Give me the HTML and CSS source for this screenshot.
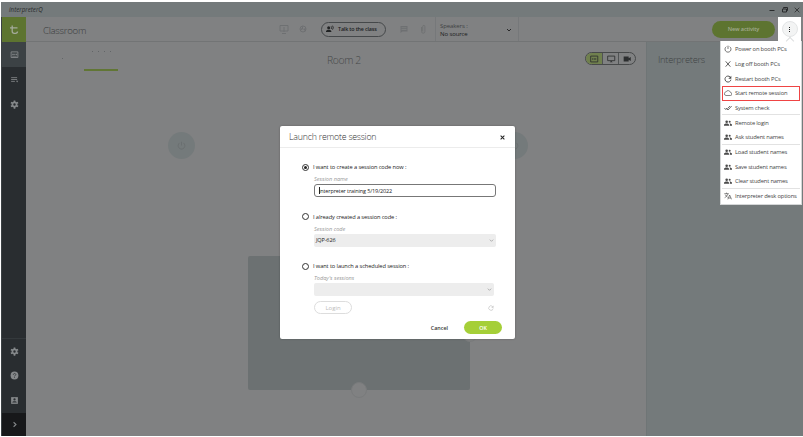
FILE: index.html
```html
<!DOCTYPE html>
<html lang="en">
<head>
    <meta charset="UTF-8">
    <meta name="viewport" content="width=device-width, initial-scale=1.0">
    <title>interpreterQ</title>
    <link rel="stylesheet" href="styles.css">
</head>
<body>
    <svg class="defs" width="0" height="0">
        <symbol id="power" viewBox="0 0 24 24"><path d="M12 2v10M7 5a9 9 0 1 0 10 0" fill="none" stroke="currentColor" stroke-width="2.2"/></symbol>
        <symbol id="cross" viewBox="0 0 24 24"><path d="M5 4l14 16M19 4L5 20" fill="none" stroke="currentColor" stroke-width="2.6"/></symbol>
        <symbol id="refresh" viewBox="0 0 24 24"><path d="M18.500 6a9 9 0 1 0 2.300 8" fill="none" stroke="currentColor" stroke-width="2.800"/><path d="M22 2v9h-9z" fill="currentColor"/></symbol>
        <symbol id="cloud" viewBox="0 0 24 24"><path d="M6 19.500h13a4.500 4.500 0 0 0 .5-9A7.500 7.500 0 0 0 5.500 9 5.300 5.300 0 0 0 6 19.500z" fill="none" stroke="currentColor" stroke-width="2"/></symbol>
        <symbol id="checks" viewBox="0 0 24 24"><path d="M1 12l6 6M6 12l6 6L23 6M10 14l8-8" fill="none" stroke="currentColor" stroke-width="2.400"/></symbol>
        <symbol id="people" viewBox="0 0 24 24"><circle cx="8" cy="8" r="3.800"/><circle cx="17" cy="8.500" r="3"/><path d="M0 20v-2c0-3 4-4.500 8-4.500s7 1.500 7 4.500v2zM17 20h7v-2c0-3-3.500-4.500-7.500-4.500 1 1 1.500 2.500 1.500 4z"/></symbol>
        <symbol id="translate" viewBox="0 0 24 24"><path d="M1 5h13M7.500 2v3M12 5c-1 5-5 9-10 12M4 8c1 3 4 6 7 8" fill="none" stroke="currentColor" stroke-width="2"/><path d="M11.500 22L17 9l5.500 13M13.500 18h7" fill="none" stroke="currentColor" stroke-width="2"/></symbol>
        <symbol id="down" viewBox="0 0 24 24"><path d="M4 8l8 8 8-8" fill="none" stroke="currentColor" stroke-width="3.500"/></symbol>
        <symbol id="gear" viewBox="0 0 24 24"><circle cx="12" cy="12" r="5.500" fill="none" stroke="currentColor" stroke-width="4.500"/><path d="M12 1v5M12 18v5M2.500 6.500l4.300 2.500M17.200 15l4.300 2.500M2.500 17.500L6.800 15M17.200 9l4.300-2.500" stroke="currentColor" stroke-width="4.500"/></symbol>
    </svg>

    <div class="app">
        <div class="titlebar">
            <span class="app-name">interpreterQ</span>
            <div class="window-buttons">
                <svg viewBox="0 0 6 6"><path d="M.5 3.500h5" stroke="currentColor"/></svg>
                <svg viewBox="0 0 6 6"><path d="M1.500 1.500v-1h4v3h-1M.5 2h4v3h-4z" fill="none" stroke="currentColor" stroke-width="1"/></svg>
                <svg viewBox="0 0 6 6"><path d="M.7.7l4.600 4.600M5.300.7L.7 5.300" stroke="currentColor" stroke-width=".8"/></svg>
            </div>
        </div>

        <div class="body">
            <nav class="sidebar">
                <a class="nav-item logo"><svg viewBox="0 0 12 12"><path d="M4.200 1.500v5.800q0 2 2 2h1.300q2 0 2-1.800M2 3.800h7.500" fill="none" stroke="currentColor" stroke-width="1.300"/></svg></a>
                <a class="nav-item active"><svg viewBox="0 0 12 12"><path d="M1.500 2.500h9v7.500h-9z" fill="none" stroke="currentColor" stroke-width="1.200"/><path d="M3 5h2v2H3zM5.700 5h1v2h-1zM7.400 5h1.800v2H7.400zM3 8h6v.8H3z" fill="currentColor"/></svg></a>
                <a class="nav-item"><svg viewBox="0 0 12 12"><path d="M1.500 3.500h8M1.500 6h8M1.500 8.500h5" stroke="currentColor" stroke-width="1.100"/><path d="M8 7.500h3L9.500 10z" fill="currentColor"/></svg></a>
                <a class="nav-item"><svg viewBox="0 0 24 24"><use href="#gear"/></svg></a>
                <div class="nav-space"></div>
                <a class="nav-item bottom"><svg viewBox="0 0 24 24"><use href="#gear"/></svg></a>
                <a class="nav-item"><svg viewBox="0 0 12 12"><circle cx="6" cy="6" r="5.200" fill="currentColor"/><path d="M4.400 5c0-2.200 3.300-2.200 3.300-.2C7.700 6 6 6 6 7.300M6 8.200v1" fill="none" stroke="#292d30" stroke-width="1"/></svg></a>
                <a class="nav-item"><svg viewBox="0 0 12 12"><path d="M1.500 1.500h9v9h-9z" fill="currentColor"/><circle cx="6" cy="4.500" r="1.500" fill="#292d30"/><path d="M3 8.800c0-2.400 6-2.400 6 0z" fill="#292d30"/></svg></a>
                <a class="nav-item expand"><svg viewBox="0 0 12 12"><path d="M4.800 3L8 6 4.800 9" fill="none" stroke="currentColor" stroke-width="1.400"/></svg></a>
            </nav>

            <div class="page">
                <header class="header">
                    <h1 class="page-title">Classroom</h1>
                    <div class="tools">
                        <svg class="tool" viewBox="0 0 12 12"><path d="M2 2.500h8v5.500H2zM4 10.500h4M6 4v5" fill="none" stroke="currentColor"/></svg>
                        <svg class="tool" viewBox="0 0 12 12"><circle cx="6" cy="6" r="3" fill="none" stroke="currentColor"/><path d="M6 2.500V6L3 8zM6 6l3-1-1 3z" fill="currentColor"/></svg>
                        <button class="talk-btn">
                            <svg viewBox="0 0 24 24"><circle cx="8" cy="8" r="4.500"/><path d="M0 21v-2c0-3 4-5 8-5s8 2 8 5v2z"/><path d="M15.500 4q3 4 0 8M19.500 2q5 6 0 12" fill="none" stroke="currentColor" stroke-width="2.500"/></svg>
                            Talk to the class
                        </button>
                        <svg class="tool" viewBox="0 0 12 12"><path d="M2.500 3h7v5.500H4.300L2.500 10z" fill="currentColor"/><path d="M3.500 4.700h5M3.500 6.500h5" stroke="#808182" stroke-width=".8"/></svg>
                        <svg class="tool" viewBox="0 0 12 12"><path d="M4.500 4v4.500a1.700 1.700 0 0 0 3.400 0V3.500a1 1 0 0 0-2.200 0v5" fill="none" stroke="currentColor" stroke-width=".9"/></svg>
                    </div>
                    <div class="speakers">
                        <div>
                            <div class="speakers-label">Speakers :</div>
                            <div class="speakers-value">No source</div>
                        </div>
                        <svg viewBox="0 0 24 24"><use href="#down"/></svg>
                    </div>
                    <button class="new-btn">New activity</button>
                    <div class="more"><button class="more-btn"><i></i><i></i><i></i></button></div>
                </header>

                <div class="content">
                    <main class="room">
                        <div class="room-bar">
                            <div class="room-tabs">
                                <span class="tab"><i></i></span>
                                <span class="tab current"><i></i><i></i><i></i><i></i></span>
                            </div>
                            <h2 class="room-title">Room 2</h2>
                            <div class="view-switch">
                                <span class="selected"><svg viewBox="0 0 12 12"><path d="M2 2.500h8.500v7H2z" fill="none" stroke="currentColor"/><path d="M4 5h1v2H4zM5.800 5h1v2h-1zM7.600 5h1v2h-1z" fill="currentColor"/></svg></span>
                                <span><svg viewBox="0 0 12 12"><path d="M2 2.500h8.500v5.500H2z" fill="none" stroke="currentColor"/><path d="M4.500 10L6.200 8 8 10z" fill="currentColor"/></svg></span>
                                <span><svg viewBox="0 0 12 12"><path d="M2 3h6v2l2.500-1.500v5L8 7v2H2z" fill="currentColor"/></svg></span>
                            </div>
                        </div>
                        <!-- room plan: seats and desk placed freely -->
                        <div class="plan">
                            <div class="seat seat-left"><svg viewBox="0 0 24 24"><use href="#power"/></svg></div>
                            <div class="seat seat-right"><svg viewBox="0 0 24 24"><use href="#power"/></svg></div>
                            <div class="desk"></div>
                            <div class="knob knob-right"></div>
                            <div class="knob knob-bottom"></div>
                        </div>
                    </main>
                    <aside class="interpreters">
                        <h2>Interpreters</h2>
                    </aside>
                </div>
            </div>
        </div>
    </div>

    <div class="menu">
        <div class="menu-item"><svg viewBox="0 0 24 24"><use href="#power"/></svg>Power on booth PCs</div>
        <div class="menu-item"><svg viewBox="0 0 24 24"><use href="#cross"/></svg>Log off booth PCs</div>
        <div class="menu-item"><svg viewBox="0 0 24 24"><use href="#refresh"/></svg>Restart booth PCs</div>
        <div class="menu-item marked"><svg viewBox="0 0 24 24"><use href="#cloud"/></svg>Start remote session</div>
        <div class="menu-item line"><svg viewBox="0 0 24 24"><use href="#checks"/></svg>System check</div>
        <div class="menu-item"><svg viewBox="0 0 24 24"><use href="#people"/></svg>Remote login</div>
        <div class="menu-item line"><svg viewBox="0 0 24 24"><use href="#people"/></svg>Ask student names</div>
        <div class="menu-item"><svg viewBox="0 0 24 24"><use href="#people"/></svg>Load student names</div>
        <div class="menu-item"><svg viewBox="0 0 24 24"><use href="#people"/></svg>Save student names</div>
        <div class="menu-item line"><svg viewBox="0 0 24 24"><use href="#people"/></svg>Clear student names</div>
        <div class="menu-item"><svg viewBox="0 0 24 24"><use href="#translate"/></svg>Interpreter desk options</div>
    </div>

    <div class="modal">
        <div class="modal-header">
            <h3>Launch remote session</h3>
            <svg viewBox="0 0 24 24"><path d="M3 3l18 18M21 3L3 21" stroke="currentColor" stroke-width="5"/></svg>
        </div>
        <div class="modal-body">
            <section class="option">
                <div class="option-title"><span class="radio checked"></span>I want to create a session code now :</div>
                <div class="label">Session name</div>
                <div class="field text-field"><span class="caret"></span>interpreter training 5/19/2022</div>
            </section>
            <section class="option">
                <div class="option-title"><span class="radio"></span>I already created a session code :</div>
                <div class="label">Session code</div>
                <div class="field select">JQP-626<svg viewBox="0 0 24 24"><use href="#down"/></svg></div>
            </section>
            <section class="option">
                <div class="option-title"><span class="radio"></span>I want to launch a scheduled session :</div>
                <div class="label">Today's sessions</div>
                <div class="field select short"><svg viewBox="0 0 24 24"><use href="#down"/></svg></div>
            </section>
            <div class="login-row">
                <button class="login-btn">Login</button>
                <svg viewBox="0 0 24 24"><use href="#refresh"/></svg>
            </div>
        </div>
        <div class="modal-footer">
            <button class="cancel-btn">Cancel</button>
            <button class="ok-btn">OK</button>
        </div>
    </div>
</body>
</html>
```

FILE: styles.css
```css
* {
    margin: 0;
    padding: 0;
    box-sizing: border-box;
}

body {
    position: relative;
    width: 803px;
    height: 437px;
    overflow: hidden;
    background: #fff;
    font-family: 'Open Sans', 'Noto Sans', sans-serif;
    font-size: 6px;
    color: #444;
}

button {
    font: inherit;
    border: none;
    background: none;
}

h1, h2, h3 {
    font-weight: 300;
    white-space: nowrap;
}

svg {
    display: block;
    flex: none;
    fill: currentColor;
}

.defs {
    position: absolute;
}

.app {
    display: flex;
    flex-direction: column;
    height: 436px;
    padding: 2px 0 0 1px;
}

.titlebar {
    flex: none;
    display: flex;
    align-items: center;
    justify-content: space-between;
    height: 15px;
    padding: 0 3px 0 8px;
    background: #747a7b;
    color: #292b2c;
}

.app-name {
    font-style: italic;
    font-size: 6.2px;
}

.window-buttons {
    display: flex;
    gap: 6.5px;
}

.window-buttons svg {
    width: 6px;
    height: 6px;
}

.body {
    flex: 1;
    display: flex;
    min-height: 0;
}

/* sidebar */
.sidebar {
    width: 25px;
    display: flex;
    flex-direction: column;
    background: #292d30;
    border-left: 1px solid #3b4144;
    color: #85888a;
}

.nav-item {
    flex: none;
    height: 25px;
    display: flex;
    align-items: center;
    justify-content: center;
}

.nav-item svg {
    width: 9px;
    height: 9px;
}

.nav-item.logo svg {
    width: 12px;
    height: 12px;
}

.logo {
    background: #5d7430;
    color: #a4aa9b;
}

.active {
    background: #3c4245;
}

.nav-space {
    flex: 1;
}

.bottom {
    border-top: 1px solid #34393c;
}

.expand {
    height: 23px;
    background: #17181a;
}

/* header */
.page {
    flex: 1;
    display: flex;
    flex-direction: column;
}

.header {
    flex: none;
    display: flex;
    align-items: center;
    height: 25px;
    padding-left: 17px;
    background: #808182;
    border-bottom: 1px solid #727475;
}

.page-title {
    width: 235px;
    padding-top: 2px;
    font-size: 9.6px;
    letter-spacing: -0.28px;
    color: #393b3c;
}

.tools {
    width: 157px;
    display: flex;
    align-items: center;
    gap: 7px;
}

.tool {
    width: 12px;
    height: 12px;
    color: #6e7072;
}

.talk-btn {
    width: 65px;
    height: 15px;
    margin: 0 5px;
    display: flex;
    align-items: center;
    gap: 4px;
    padding-left: 4px;
    border: 1px solid #45484a;
    border-radius: 8px;
    font-size: 5.4px;
    letter-spacing: -0.17px;
    font-weight: 600;
    white-space: nowrap;
    color: #202223;
}

.talk-btn svg {
    width: 8px;
    height: 8px;
}

.speakers {
    width: 84px;
    height: 24px;
    display: flex;
    align-items: center;
    justify-content: space-between;
    padding: 1px 6px 0 4px;
    border: solid #76787a;
    border-width: 0 1px;
    line-height: 8px;
    letter-spacing: -0.1px;
}

.speakers-label {
    color: #3f4142;
}

.speakers-value,
.speakers svg {
    color: #1b1c1d;
}

.speakers svg {
    width: 6px;
    height: 6px;
}

.new-btn {
    width: 63px;
    height: 17px;
    margin-left: auto;
    border-radius: 9px;
    background: #5d7430;
    color: #a2aa91;
    font-weight: 600;
    font-size: 5.6px;
    letter-spacing: -0.15px;
}

.more {
    width: 23px;
    height: 25px;
    margin: 0 2px 0 3px;
    display: flex;
    align-items: center;
    justify-content: center;
    background: #fff;
}

.more-btn {
    width: 16px;
    height: 16px;
    display: flex;
    flex-direction: column;
    align-items: center;
    justify-content: center;
    gap: 1px;
    border: 1px solid #e3e5e6;
    border-radius: 50%;
    background: #f3f4f4;
}

.more-btn i {
    width: 1px;
    height: 1px;
    background: #222;
}

/* room */
.content {
    flex: 1;
    display: flex;
}

.room {
    flex: 1;
    background: #808182;
}

.room-bar {
    display: flex;
    height: 36px;
}

.room-tabs {
    width: 301px;
    display: flex;
    gap: 21px;
    padding: 9px 0 0 36px;
}

.tab {
    height: 20px;
    display: flex;
    justify-content: center;
    gap: 5px;
}

.tab i {
    width: 1px;
    height: 1px;
    background: #626567;
}

.tab:first-child {
    padding-top: 7px;
}

.current {
    width: 34px;
    border-bottom: 2px solid #617635;
}

.room-title {
    padding-top: 9px;
    font-size: 10.4px;
    letter-spacing: -0.4px;
    line-height: 18px;
    color: #47494a;
}

.view-switch {
    width: 51px;
    height: 13px;
    margin: 10px 10px 0 auto;
    display: flex;
    overflow: hidden;
    border: 1px solid #47494a;
    border-radius: 7px;
    color: #2c2e2f;
}

.view-switch span {
    flex: 1;
    display: flex;
    align-items: center;
    justify-content: center;
}

.view-switch span + span {
    border-left: 1px solid #505354;
}

.view-switch .selected {
    background: #70804e;
}

.view-switch svg {
    width: 10px;
    height: 10px;
}

.plan {
    position: relative;
}

.seat {
    position: absolute;
    top: 54px;
    width: 27px;
    height: 27px;
    display: flex;
    align-items: center;
    justify-content: center;
    border-radius: 50%;
    background: #747a7b;
    color: #686d6f;
}

.seat svg {
    width: 9px;
    height: 9px;
}

.seat-left {
    left: 142px;
}

.seat-right {
    left: 475px;
}

.desk {
    position: absolute;
    left: 222px;
    top: 178px;
    width: 222px;
    height: 134px;
    border-radius: 2px;
    background: #6c7172;
}

.knob {
    position: absolute;
    width: 16px;
    height: 16px;
    border: 1px solid #797b7c;
    border-radius: 50%;
    background: #808182;
}

.knob-right {
    left: 436px;
    top: 248px;
}

.knob-bottom {
    left: 325px;
    top: 304px;
}

.interpreters {
    width: 157px;
    padding: 9px 0 0 11px;
    border-left: 1px solid #6f7576;
    background: #747a7b;
}

.interpreters h2 {
    font-size: 9.4px;
    letter-spacing: -0.3px;
    line-height: 18px;
    color: #404445;
}

/* drop-down menu */
.menu {
    position: absolute;
    left: 720px;
    top: 41px;
    width: 82px;
    height: 164px;
    padding: 1px;
    background: #fff;
    border: 1px solid #d5d7d8;
    border-top: none;
}

.menu::before {
    content: '';
    position: absolute;
    left: 66px;
    top: -3px;
    width: 5px;
    height: 5px;
    transform: rotate(45deg);
    border: solid #dcdedf;
    border-width: 1px 0 0 1px;
    background: #fff;
}

.menu-item {
    height: 14.7px;
    display: flex;
    align-items: center;
    gap: 3px;
    padding-left: 2px;
    white-space: nowrap;
    font-size: 5.8px;
    letter-spacing: -0.17px;
}

.menu-item svg {
    width: 8px;
    height: 8px;
    color: #4a4a4a;
}

.marked {
    outline: 1px solid #ef4444;
    outline-offset: -1px;
}

.line {
    border-bottom: 1px solid #e2e2e2;
}

/* modal */
.modal {
    position: absolute;
    left: 280px;
    top: 126px;
    width: 235px;
    height: 213px;
    background: #fff;
    border-radius: 2px;
    box-shadow: 0 0 2px rgba(0, 0, 0, 0.3);
}

.modal-header {
    height: 22px;
    display: flex;
    align-items: center;
    justify-content: space-between;
    padding: 1px 10px 0 9px;
    border-bottom: 1px solid #ececec;
}

.modal-header h3 {
    font-size: 8.8px;
    letter-spacing: -0.22px;
    color: #333;
}

.modal-header svg {
    width: 5px;
    height: 5px;
    color: #222;
}

.modal-body {
    padding: 14px 19px 0 34px;
}

.option {
    height: 49.5px;
}

.option:nth-child(3) {
    height: 35px;
}

.option-title {
    display: flex;
    align-items: center;
    height: 10px;
    margin-left: -12px;
    font-size: 5.7px;
    letter-spacing: -0.1px;
    color: #222;
}

.radio {
    width: 7px;
    height: 7px;
    margin-right: 4px;
    border: 1px solid #333;
    border-radius: 50%;
}

.checked {
    padding: 1px;
    background: #222;
    background-clip: content-box;
}

.label {
    height: 12px;
    line-height: 14px;
    font-size: 5.6px;
    font-style: italic;
    color: #999;
}

.field {
    display: flex;
    align-items: center;
    height: 13px;
    border-radius: 2px;
    font-size: 5.5px;
    letter-spacing: -0.12px;
    color: #222;
}

.text-field {
    padding-left: 4px;
    border: 1px solid #777;
    border-radius: 3px;
}

.caret {
    width: 1px;
    height: 7px;
    margin-right: -1px;
    background: #222;
}

.select {
    padding: 0 2px;
    background: #ededed;
}

.select svg {
    width: 5px;
    height: 5px;
    margin-left: auto;
    color: #999;
}

.short {
    width: 180px;
}

.login-row {
    display: flex;
    align-items: center;
    justify-content: space-between;
    height: 13px;
    margin-top: 5px;
    padding-right: 2px;
}

.login-row svg {
    width: 6px;
    height: 6px;
    color: #c4c4c4;
}

.login-btn {
    width: 38px;
    height: 13px;
    border: 1px solid #ddd;
    border-radius: 7px;
    color: #bbb;
}

.modal-footer {
    display: flex;
    justify-content: flex-end;
    gap: 16px;
    padding: 7px 13px 0 0;
    font-weight: 600;
    font-size: 5.4px;
    letter-spacing: -0.1px;
}

.cancel-btn {
    color: #333;
}

.ok-btn {
    width: 38px;
    height: 13px;
    border-radius: 7px;
    background: #a5cf38;
    color: #fff;
}
```
